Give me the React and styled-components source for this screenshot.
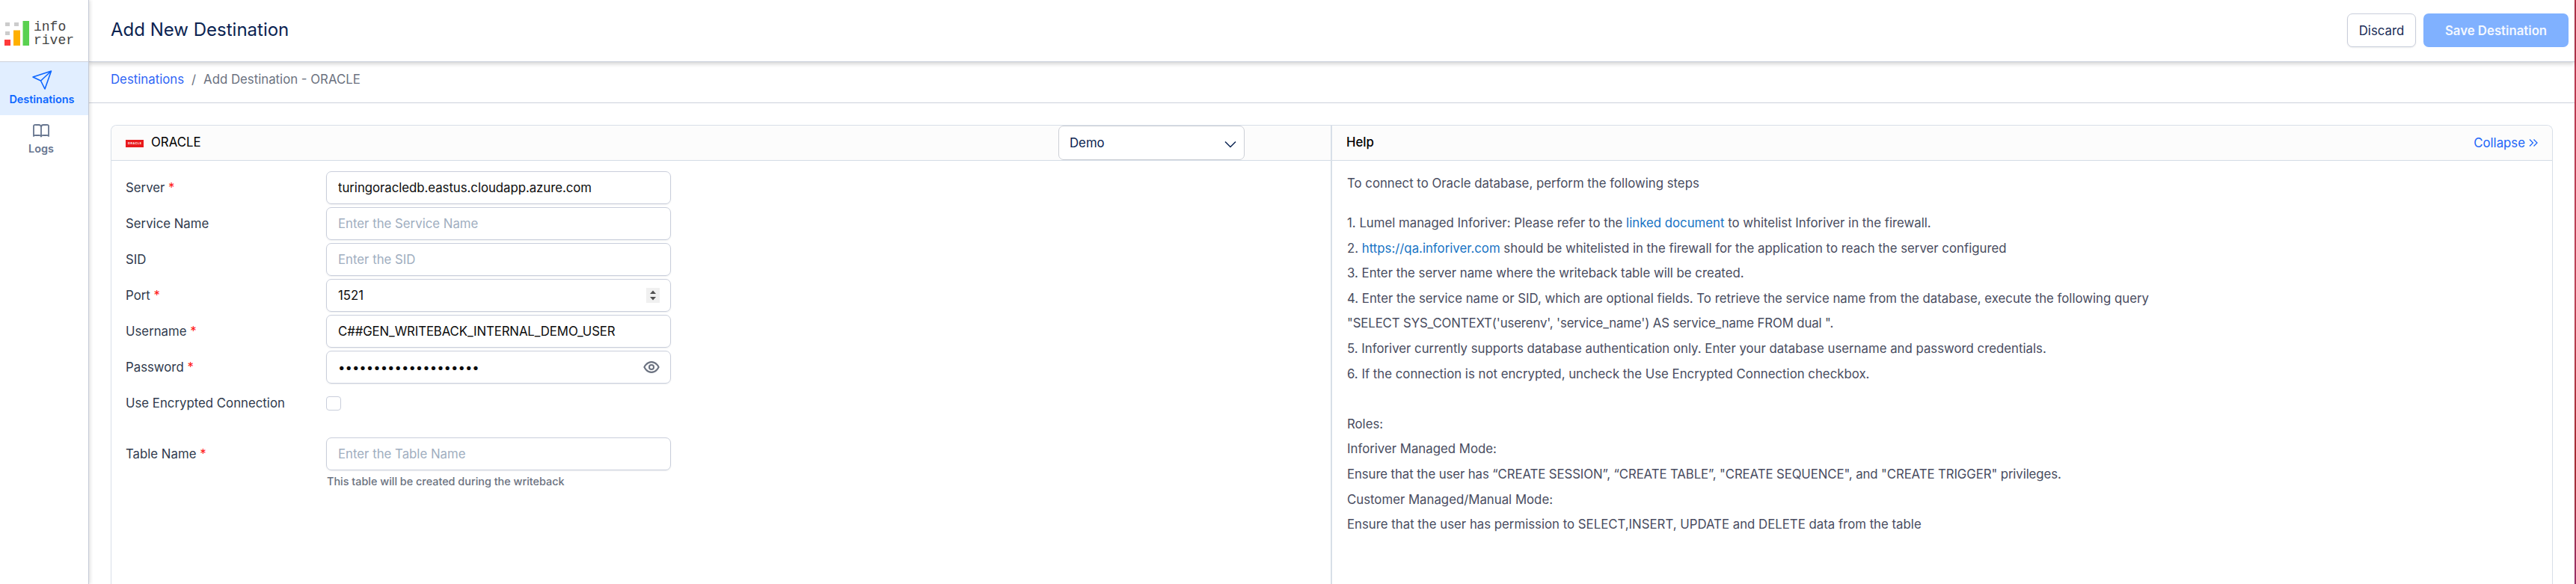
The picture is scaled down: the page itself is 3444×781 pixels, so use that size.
import React from "react";
import styled, { createGlobalStyle } from "styled-components";

const Global = createGlobalStyle`
  * { box-sizing: border-box; }
  html, body { margin: 0; height: 781px; overflow: hidden; }
  body { background: #fff; font-family: Inter, "Liberation Sans", sans-serif; font-size: 16.8px; font-weight: 400; color: #212b41; }
  button, input { font: inherit; }
`;

const Page = styled.div`
  display: flex;
  width: 3444px;
  height: 781px;
  overflow: hidden;
`;
const Sidebar = styled.nav`
  width: 119px;
  flex: none;
  border-right: 1px solid #c5cad6;
  box-shadow: 1px 0 5px rgba(0, 0, 0, 0.16);
  z-index: 2;
  background: #fff;
`;
const LogoBox = styled.div`
  height: 83px;
  border-bottom: 1px solid #cdd1db;
  padding: 28px 0 0 6px;
  display: flex;
  gap: 6px;
`;
const LogoText = styled.div`
  font-family: "Liberation Mono", monospace;
  font-size: 18px;
  line-height: 17.5px;
  color: #444;
  margin-top: 0;
`;
const NavItem = styled.a`
  display: flex;
  flex-direction: column;
  align-items: center;
  height: ${(p) => (p.$active ? 71 : 68)}px;
  padding: ${(p) => (p.$active ? "10px 6px 0 0" : "11px 8px 0 0")};
  gap: ${(p) => (p.$active ? 2 : 4)}px;
  background: ${(p) => (p.$active ? "#e1eeff" : "#fff")};
  color: ${(p) => (p.$active ? "#0c66ff" : "#66758f")};
  font-size: 14.4px;
  line-height: 20px;
  font-weight: 600;
`;
const Main = styled.main`
  flex: 1;
  min-width: 0;
  display: flex;
  flex-direction: column;
`;
const TopBar = styled.header`
  height: 83px;
  flex: none;
  display: flex;
  align-items: center;
  gap: 10px;
  padding: 0 8px 1px 29px;
  border-bottom: 1px solid #c9ced9;
  box-shadow: 0 2px 6px rgba(0, 0, 0, 0.2);
  z-index: 1;
`;
const Title = styled.h1`
  flex: 1;
  margin: 0;
  padding-bottom: 2px;
  font-size: 24px;
  font-weight: 400;
  line-height: 32px;
  color: #0a2351;
`;
const Button = styled.button`
  height: 45px;
  width: ${(p) => (p.$primary ? 194 : 92)}px;
  border-radius: 7px;
  border: ${(p) => (p.$primary ? "0" : "1px solid #c9cedb")};
  background: ${(p) => (p.$primary ? "#80b1ff" : "#fff")};
  color: ${(p) => (p.$primary ? "#f4f8ff" : "#172b55")};
  font-weight: ${(p) => (p.$primary ? 600 : 400)};
  box-shadow: ${(p) => (p.$primary ? "none" : "0 1px 2px rgba(16, 24, 40, 0.08)")};
  padding: 0;
`;
const Crumbs = styled.div`
  height: 55px;
  flex: none;
  padding: 11px 29px 0;
  display: flex;
  gap: 10px;
  line-height: 24px;
  border-bottom: 1px solid #cdd1db;
  color: #6b7280;
`;
const CrumbLink = styled.a`
  color: #2f66f5;
`;
const Card = styled.div`
  flex: 1;
  margin: 29px 29px 0;
  border: 1px solid #d8dfe8;
  border-bottom: 0;
  border-radius: 8px 8px 0 0;
  display: flex;
  overflow: hidden;
`;
const FormPane = styled.section`
  width: 1630px;
  flex: none;
`;
const HelpPane = styled.section`
  flex: 1;
  border-left: 2px solid #d8dfe8;
`;
const PaneHead = styled.div`
  height: 47px;
  background: #fcfcfc;
  border-bottom: 1px solid #d3dbe5;
  display: flex;
  align-items: center;
  padding: 0 19px;
  line-height: 24px;
  color: #000;
`;
const Badge = styled.svg`
  margin: 1px 10px 0 0;
`;
const PaneTitle = styled.span`
  flex: 1;
  padding-bottom: 2px;
  font-weight: ${(p) => (p.$strong ? 500 : 400)};
`;
const Select = styled.div`
  width: 249px;
  height: 46px;
  margin-right: 96px;
  background: #fff;
  border: 1px solid #cccfd6;
  border-radius: 7px;
  display: flex;
  align-items: center;
  justify-content: space-between;
  padding: 0 10px 0 14px;
  color: #0a2351;
`;
const Chevron = styled.svg`
  margin-top: 3px;
`;
const Collapse = styled.a`
  display: flex;
  align-items: center;
  gap: 5px;
  padding-bottom: 1px;
  color: #1c66f8;
`;
const Form = styled.div`
  padding: 12px 19px;
`;
const Row = styled.label`
  display: flex;
  align-items: center;
  height: 48px;
  margin-top: ${(p) => p.$gap || 0}px;
`;
const Label = styled.span`
  width: 268px;
  flex: none;
  color: #2f3a4d;
`;
const Star = styled.span`
  color: #ff1a1a;
`;
const Field = styled.span`
  width: 461px;
  height: 44px;
  border: 1px solid #c9cedb;
  border-radius: 7px;
  box-shadow: 0 1px 2px rgba(16, 24, 40, 0.07);
  display: flex;
  align-items: center;
  padding: 0 14px 0 15px;
`;
const Input = styled.input`
  flex: 1;
  min-width: 0;
  border: 0;
  padding: 0;
  outline: 0;
  background: transparent;
  color: #0c0c0c;
  letter-spacing: ${(p) => (p.$spacing ? p.$spacing + "px" : "normal")};
  &::placeholder { color: #a0aec0; opacity: 1; }
`;
const Check = styled.span`
  width: 20px;
  height: 19px;
  border: 1px solid #c9cedb;
  border-radius: 4px;
`;
const Hint = styled.div`
  margin: 3px 0 0 269px;
  font-size: 14.4px;
  line-height: 20px;
  font-weight: 500;
  color: #6b7280;
`;
const HelpBody = styled.div`
  padding: 14px 20px;
  color: #484c60;
  line-height: 33.6px;
`;
const HelpLine = styled.p`
  margin: 0 0 ${(p) => (p.$intro ? 19.5 : 0)}px;
  letter-spacing: ${(p) => (p.$spacing ? p.$spacing + "px" : "normal")};
`;
const HelpLink = styled.a`
  color: #1673c4;
`;
const Gap = styled.div`
  height: 33.6px;
`;
const Edge = styled.div`
  width: 2px;
  flex: none;
  background: linear-gradient(#b8344c, #bd4458 50%, #a52c33 78%, #a3303c 84%, #98306a);
`;

const fields = [
  { label: "Server", required: true, value: "turingoracledb.eastus.cloudapp.azure.com", spacing: -0.04 },
  { label: "Service Name", placeholder: "Enter the Service Name" },
  { label: "SID", placeholder: "Enter the SID" },
  { label: "Port", required: true, value: "1521", icon: "spin" },
  { label: "Username", required: true, value: "C##GEN_WRITEBACK_INTERNAL_DEMO_USER", spacing: -0.11 },
  { label: "Password", required: true, value: "••••••••••••••••••••", icon: "eye" },
];

const FieldIcon = ({ kind }) => {
  if (kind === "spin")
    return (
      <svg width="18" height="20" viewBox="0 0 18 20">
        <path fill="#f0f0f0" d="M0 0h18v20H0z" />
        <path fill="#505050" d="M5 8h8L9 3.500zM5 12h8l-4 4.500z" />
      </svg>
    );
  if (kind === "eye")
    return (
      <svg width="22" height="22" viewBox="0 0 24 24" fill="none" stroke="#6b7280" strokeWidth="2.200">
        <path d="M1.500 12S5 4.500 12 4.500 22.500 12 22.500 12 19 19.500 12 19.500 1.500 12 1.500 12z" />
        <circle cx="12" cy="12" r="3.300" />
      </svg>
    );
  return null;
};

const FormRow = ({ label, required, value, placeholder, icon, gap, spacing }) => (
  <Row $gap={gap}>
    <Label>
      {label} {required && <Star>*</Star>}
    </Label>
    <Field>
      <Input defaultValue={value} placeholder={placeholder} $spacing={spacing} />
      <FieldIcon kind={icon} />
    </Field>
  </Row>
);

export default function App() {
  return (
    <Page>
      <Global />
      <Sidebar>
        <LogoBox>
          <svg width="33" height="33" viewBox="0 0 33 33">
            <path fill="#ccc" d="M1 2h6v5H1zM13 2h6v5h-6zM1 14h6v5H1z" />
            <path fill="#ff3b3b" d="M0 25h8v8H0z" />
            <path fill="#ffb000" d="M12 12.500h9V33h-9z" />
            <path fill="#5ad150" d="M24.500 0H33v33h-8.500z" />
          </svg>
          <LogoText>
            info
            <br />
            river
          </LogoText>
        </LogoBox>
        <NavItem $active>
          <svg width="28" height="28" viewBox="0 0 28 28" fill="none" stroke="currentColor" strokeWidth="1.600" strokeLinejoin="round">
            <path d="M26.500 2L2 10l10.500 5L18 26zM26.500 2l-14 13" />
          </svg>
          Destinations
        </NavItem>
        <NavItem>
          <svg width="22" height="20" viewBox="0 0 22 20" fill="none" stroke="currentColor" strokeWidth="1.800" strokeLinejoin="round" strokeLinecap="round">
            <path d="M11 5a3 3 0 0 0-3-3H4a3 3 0 0 0-3 1v14a3 3 0 0 1 3-1h4a3 3 0 0 1 3 1.500A3 3 0 0 1 14 16h4a3 3 0 0 1 3 1V3a3 3 0 0 0-3-1h-4a3 3 0 0 0-3 3zv12" />
          </svg>
          Logs
        </NavItem>
      </Sidebar>
      <Main>
        <TopBar>
          <Title>Add New Destination</Title>
          <Button>Discard</Button>
          <Button $primary>Save Destination</Button>
        </TopBar>
        <Crumbs>
          <CrumbLink>Destinations</CrumbLink>
          <span>/</span>
          <span>Add Destination - ORACLE</span>
        </Crumbs>
        <Card>
          <FormPane>
            <PaneHead>
              <Badge width="24" height="10" viewBox="0 0 24 10">
                <path fill="#e8191c" d="M0 0h24v10H0z" />
                <text x="3" y="6.200" fill="#fff" fontSize="3.500" fontWeight="700" textLength="18">ORACLE</text>
              </Badge>
              <PaneTitle>ORACLE</PaneTitle>
              <Select>
                Demo
                <Chevron width="16" height="10" viewBox="0 0 16 10" fill="none" stroke="#0a2351" strokeWidth="1.500">
                  <path d="M1 1.500l7 7 7-7" />
                </Chevron>
              </Select>
            </PaneHead>
            <Form>
              {fields.map((f) => (
                <FormRow key={f.label} {...f} />
              ))}
              <Row>
                <Label>Use Encrypted Connection</Label>
                <Check />
              </Row>
              <FormRow label="Table Name" required placeholder="Enter the Table Name" gap={20} />
              <Hint>This table will be created during the writeback</Hint>
            </Form>
          </FormPane>
          <HelpPane>
            <PaneHead>
              <PaneTitle $strong>Help</PaneTitle>
              <Collapse>
                Collapse
                <svg width="12" height="12" viewBox="0 0 12 12" fill="none" stroke="currentColor" strokeWidth="1.300">
                  <path d="M1 1.500L5.500 6 1 10.500M6.500 1.500L11 6l-4.500 4.500" />
                </svg>
              </Collapse>
            </PaneHead>
            <HelpBody>
              <HelpLine $intro>To connect to Oracle database, perform the following steps</HelpLine>
              <HelpLine>1. Lumel managed Inforiver: Please refer to the <HelpLink>linked document</HelpLink> to whitelist Inforiver in the firewall.</HelpLine>
              <HelpLine>2. <HelpLink>https://qa.inforiver.com</HelpLink> should be whitelisted in the firewall for the application to reach the server configured</HelpLine>
              <HelpLine>3. Enter the server name where the writeback table will be created.</HelpLine>
              <HelpLine>4. Enter the service name or SID, which are optional fields. To retrieve the service name from the database, execute the following query</HelpLine>
              <HelpLine $spacing={-0.13}>"SELECT SYS_CONTEXT('userenv', 'service_name') AS service_name FROM dual ".</HelpLine>
              <HelpLine>5. Inforiver currently supports database authentication only. Enter your database username and password credentials.</HelpLine>
              <HelpLine>6. If the connection is not encrypted, uncheck the Use Encrypted Connection checkbox.</HelpLine>
              <Gap />
              <HelpLine>Roles:</HelpLine>
              <HelpLine>Inforiver Managed Mode:</HelpLine>
              <HelpLine $spacing={-0.1}>Ensure that the user has “CREATE SESSION”, “CREATE TABLE”, "CREATE SEQUENCE", and "CREATE TRIGGER" privileges.</HelpLine>
              <HelpLine>Customer Managed/Manual Mode:</HelpLine>
              <HelpLine>Ensure that the user has permission to SELECT,INSERT, UPDATE and DELETE data from the table</HelpLine>
            </HelpBody>
          </HelpPane>
        </Card>
      </Main>
      <Edge />
    </Page>
  );
}
